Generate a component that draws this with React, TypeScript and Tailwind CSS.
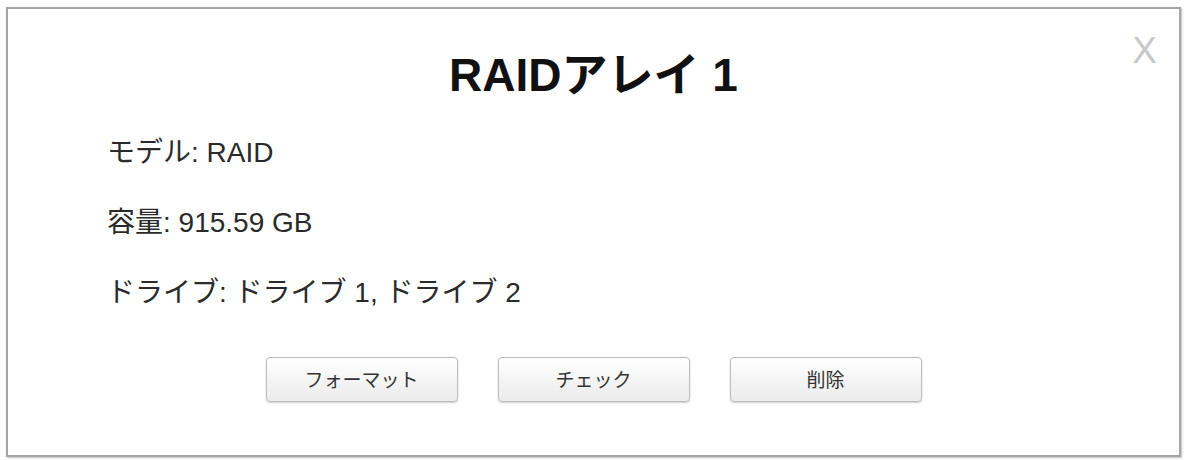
export default function App() {
  const font = { fontFamily: '"Liberation Sans", "Noto Sans CJK JP", sans-serif' };
  const rows = ["モデル: RAID", "容量: 915.59 GB", "ドライブ: ドライブ 1, ドライブ 2"];
  const buttons = ["フォーマット", "チェック", "削除"];

  return (
    <div className="w-[1185px] h-[460px] bg-white overflow-hidden" style={font}>
      <div className="relative ml-[6px] mt-[7px] w-[1175px] h-[450px] border-2 border-[#a6a6a6] bg-white shadow-[1px_1px_2px_rgba(0,0,0,0.25)] flex flex-col">
        <button className="absolute top-[23px] right-[22px] text-[37px] leading-none text-[#c8c8c8]">X</button>

        <h1 className="mt-[43px] text-center text-[46px] leading-none font-bold text-[#111]">RAIDアレイ 1</h1>

        <div className="mt-[41px] pl-[99px] flex flex-col gap-[42px] text-[28px] leading-none text-[#2a2a2a]">
          {rows.map((r) => (
            <p key={r}>{r}</p>
          ))}
        </div>

        <div className="mt-[50px] flex justify-center gap-[40px]">
          {buttons.map((b) => (
            <button
              key={b}
              className="w-[192px] h-[45px] rounded-[4px] border border-[#bcbcbc] bg-gradient-to-b from-white to-[#ebebeb] shadow-[0_1px_2px_rgba(0,0,0,0.2)] text-[19px] text-[#333]"
              style={{ fontFamily: '"Noto Sans CJK JP", sans-serif' }}
            >
              {b}
            </button>
          ))}
        </div>
      </div>
    </div>
  );
}
